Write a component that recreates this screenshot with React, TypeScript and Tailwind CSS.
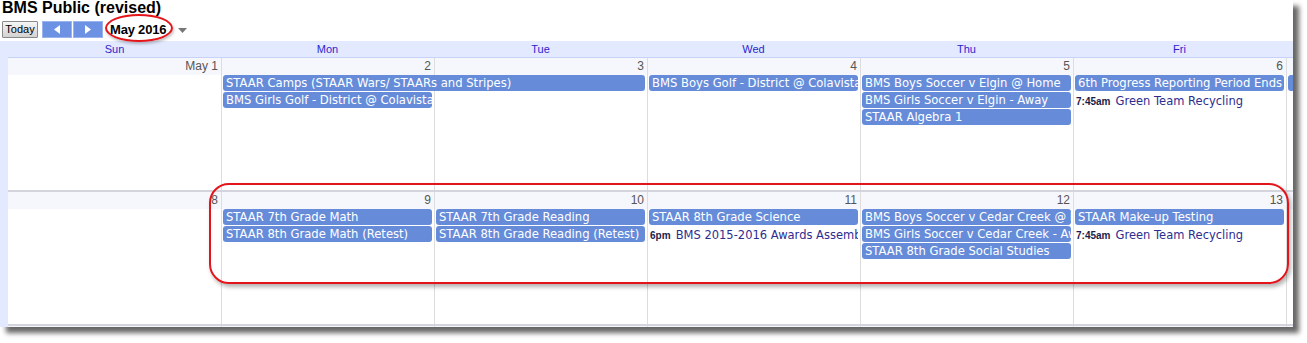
import React from "react";

type Ev = { c: number; r: number; span?: number; title: string; time?: string };

const COL = ["col-start-1", "col-start-2", "col-start-3", "col-start-4", "col-start-5", "col-start-6", "col-start-7"];
const ROW = ["row-start-1", "row-start-2", "row-start-3", "row-start-4"];
const SPAN = ["col-span-1", "col-span-2"];

const dayNames = ["Sun", "Mon", "Tue", "Wed", "Thu", "Fri", "Sat"];

const weeks: { days: string[]; events: Ev[] }[] = [
  {
    days: ["May 1", "2", "3", "4", "5", "6", "7"],
    events: [
      { c: 2, r: 2, span: 2, title: "STAAR Camps (STAAR Wars/ STAARs and Stripes)" },
      { c: 2, r: 3, title: "BMS Girls Golf - District @ Colavista" },
      { c: 4, r: 2, title: "BMS Boys Golf - District @ Colavista" },
      { c: 5, r: 2, title: "BMS Boys Soccer v Elgin @ Home" },
      { c: 5, r: 3, title: "BMS Girls Soccer v Elgin - Away" },
      { c: 5, r: 4, title: "STAAR Algebra 1" },
      { c: 6, r: 2, title: "6th Progress Reporting Period Ends" },
      { c: 6, r: 3, time: "7:45am", title: "Green Team Recycling" },
      { c: 7, r: 2, title: "" },
    ],
  },
  {
    days: ["8", "9", "10", "11", "12", "13", "14"],
    events: [
      { c: 2, r: 2, title: "STAAR 7th Grade Math" },
      { c: 2, r: 3, title: "STAAR 8th Grade Math (Retest)" },
      { c: 3, r: 2, title: "STAAR 7th Grade Reading" },
      { c: 3, r: 3, title: "STAAR 8th Grade Reading (Retest)" },
      { c: 4, r: 2, title: "STAAR 8th Grade Science" },
      { c: 4, r: 3, time: "6pm", title: "BMS 2015-2016 Awards Assembly" },
      { c: 5, r: 2, title: "BMS Boys Soccer v Cedar Creek @ Home" },
      { c: 5, r: 3, title: "BMS Girls Soccer v Cedar Creek - Away" },
      { c: 5, r: 4, title: "STAAR 8th Grade Social Studies" },
      { c: 6, r: 2, title: "STAAR Make-up Testing" },
      { c: 6, r: 3, time: "7:45am", title: "Green Team Recycling" },
    ],
  },
  { days: ["15", "16", "17", "18", "19", "20", "21"], events: [] },
];

function Week({ days, events }: { days: string[]; events: Ev[] }) {
  return (
    <div className="grid grid-cols-[repeat(7,213px)] grid-rows-[17px_17px_17px_17px_1fr] h-[134px] border-b-2 border-[#d4d4dc]">
      {days.map((d, i) => (
        <div key={i} className={`${COL[i]} row-span-full ${i > 0 ? "border-l border-[#dddddd]" : ""}`}>
          <div className="h-[17px] bg-[#f6f7fc] text-right pr-[3px] text-[12px] leading-[17px] text-[#555] font-['Liberation_Sans',sans-serif]">
            {d}
          </div>
        </div>
      ))}
      {events.map((e, i) =>
        e.time ? (
          <div
            key={i}
            className={`${COL[e.c - 1]} ${ROW[e.r - 1]} min-w-0 mx-[2px] px-[1px] h-[16px] leading-[16px] whitespace-nowrap overflow-hidden`}
          >
            <span className="text-[10px] font-bold text-[#1c1c4a] font-['Liberation_Sans',sans-serif]">{e.time}</span>{" "}
            <span className="text-[11.5px] text-[#2d2d8f]">{e.title}</span>
          </div>
        ) : (
          <div
            key={i}
            className={`${COL[e.c - 1]} ${SPAN[(e.span ?? 1) - 1]} ${ROW[e.r - 1]} min-w-0 mx-[2px] h-[16px] rounded-[3px] bg-[#668cd9] text-white px-[3px] text-[11.6px] leading-[16px] whitespace-nowrap overflow-hidden`}
          >
            {e.title}
          </div>
        )
      )}
    </div>
  );
}

export default function App() {
  return (
    <div className="w-[1307px] h-[343px] bg-white font-['DejaVu_Sans',sans-serif]">
      <div className="relative w-[1293px] h-[327px] overflow-hidden bg-white shadow-[6px_6px_5px_rgba(0,0,0,0.6)]">
        {/* Title */}
        <div className="h-[21px] pl-[2px] text-[16px] font-bold leading-[15px] text-black font-['Liberation_Sans',sans-serif]">
          BMS Public (revised)
        </div>

        {/* Toolbar */}
        <div className="h-[17px] flex items-center font-['Liberation_Sans',sans-serif]">
          <button className="ml-[2px] w-[36px] h-[17px] border border-[#8a8a8a] rounded-[1px] bg-gradient-to-b from-[#f6f6f6] to-[#d2d2d2] text-[11px] leading-none text-black">
            Today
          </button>
          <button className="ml-[4px] w-[30px] h-[17px] flex items-center justify-center bg-[#6d91e3] border border-[#9ab3ee]">
            <svg width="6" height="9" viewBox="0 0 6 9">
              <path d="M6 0 L0 4.5 L6 9 Z" fill="white" />
            </svg>
          </button>
          <button className="ml-[1px] w-[30px] h-[17px] flex items-center justify-center bg-[#6d91e3] border border-[#9ab3ee]">
            <svg width="6" height="9" viewBox="0 0 6 9">
              <path d="M0 0 L6 4.5 L0 9 Z" fill="white" />
            </svg>
          </button>
          <span className="ml-[7px] text-[13px] font-bold tracking-[-0.2px] text-black">May 2016</span>
          <svg className="ml-[12px] mt-[1px]" width="9" height="5" viewBox="0 0 9 5">
            <path d="M0 0 L9 0 L4.5 5 Z" fill="#777" />
          </svg>
        </div>
        <div className="h-[3px]" />

        {/* Calendar */}
        <div className="flex h-[286px]">
          <div className="w-[8px] shrink-0 bg-[#e3e9ff]" />
          <div className="flex-1 min-w-0 overflow-hidden">
            <div className="grid grid-cols-[repeat(7,213px)] h-[17px] bg-[#e3e9ff] border-b border-[#c6d2f7]">
              {dayNames.map((d) => (
                <div key={d} className="text-center text-[11px] leading-[16px] text-[#2b1fcf] font-['Liberation_Sans',sans-serif]">
                  {d}
                </div>
              ))}
            </div>
            {weeks.map((w, i) => (
              <Week key={i} days={w.days} events={w.events} />
            ))}
          </div>
        </div>

        {/* Annotations */}
        <div className="absolute left-[105px] top-[14px] w-[68px] h-[28px] rounded-[50%] border-2 border-[#e3151a] shadow-[1px_2px_3px_rgba(0,0,0,0.25)]" />
        <div className="absolute left-[209px] top-[183px] w-[1080px] h-[101px] rounded-[20px] border-2 border-[#e3151a] shadow-[2px_3px_4px_rgba(0,0,0,0.3)]" />
      </div>
    </div>
  );
}
